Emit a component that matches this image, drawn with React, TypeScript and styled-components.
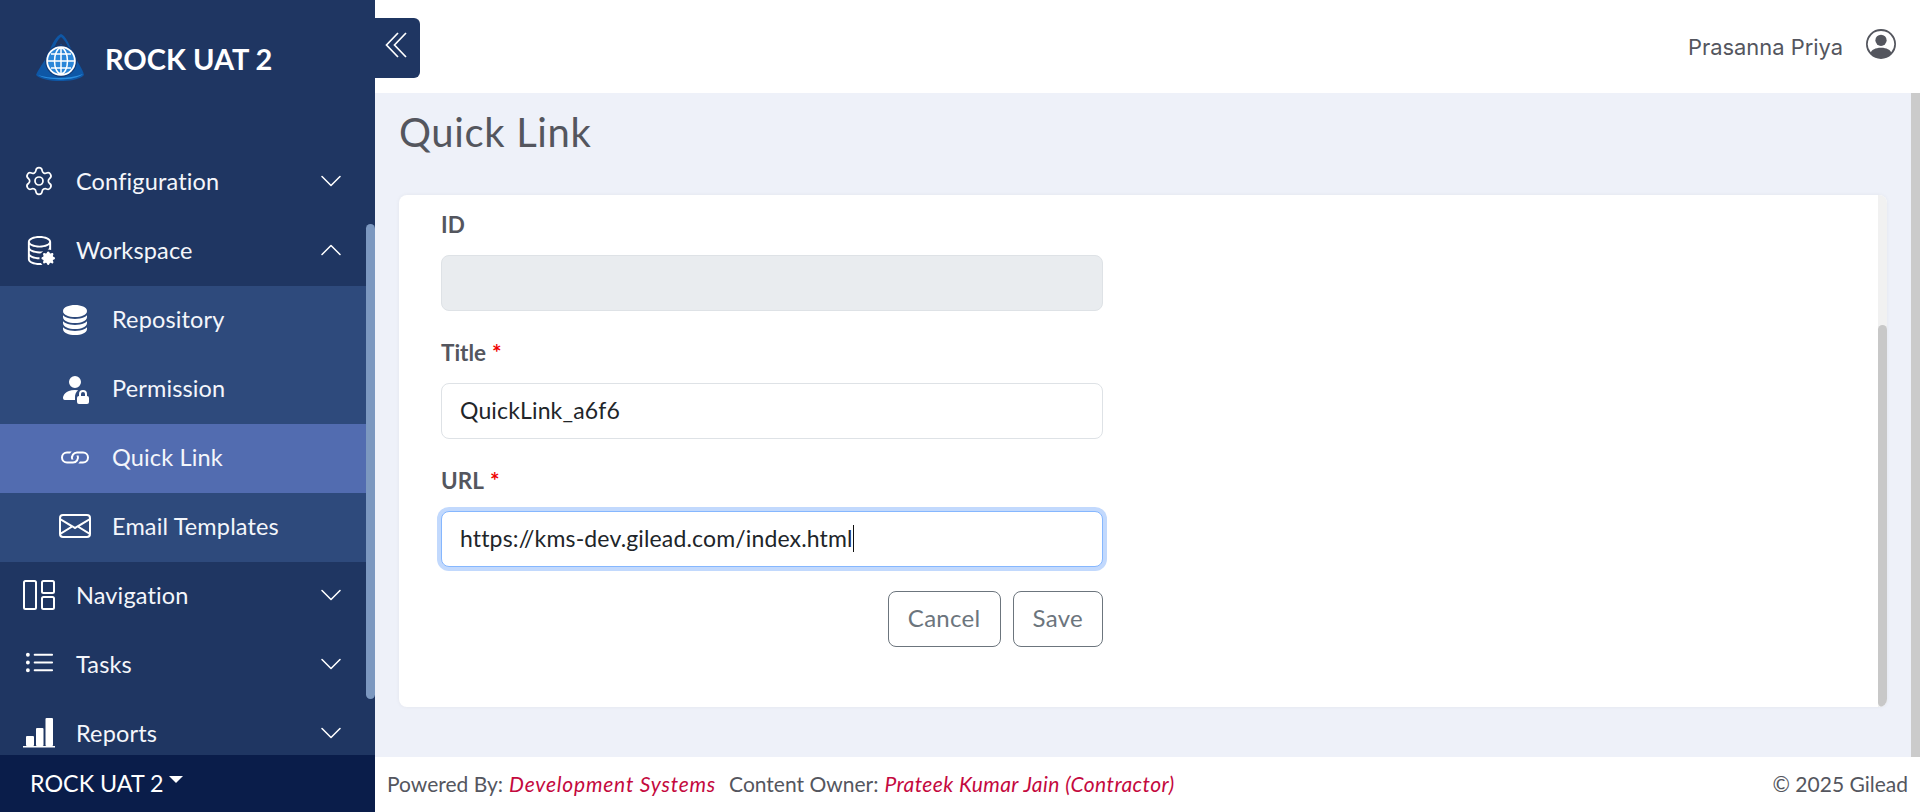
import styled, { createGlobalStyle } from "styled-components";
import { ChevronDown, ChevronUp, Settings } from "lucide-react";
import {
  BsDatabaseFill,
  BsDatabaseGear,
  BsEnvelope,
  BsLink,
  BsListUl,
  BsPersonCircle,
  BsPersonFillLock,
} from "react-icons/bs";
import type { ReactNode } from "react";

const FONT = `Lato, "Open Sans", "Liberation Sans", sans-serif`;

const GlobalStyle = createGlobalStyle`
  html, body {
    margin: 0;
    height: 100%;
    overflow: hidden;
    font-family: ${FONT};
  }
  * { box-sizing: border-box; }
`;

const Shell = styled.div`
  display: grid;
  grid-template-columns: 375px 1fr;
  width: 100%;
  height: 812px;
  background: #fff;
`;

const Sidebar = styled.aside`
  display: flex;
  flex-direction: column;
  height: 812px;
  background: #1f3662;
  color: #fff;
  overflow: hidden;
`;

const Brand = styled.div`
  display: flex;
  align-items: center;
  gap: 21px;
  height: 148px;
  flex: none;
  padding: 0 0 32px 36px;
`;

const BrandName = styled.div`
  font-size: 29px;
  font-weight: 700;
  color: #fff;
`;

const NavArea = styled.div`
  position: relative;
  flex: 1;
  min-height: 0;
  overflow: hidden;
  padding-right: 9px;
`;

const ScrollThumb = styled.div`
  position: absolute;
  top: 76px;
  right: 0;
  width: 9px;
  height: 475px;
  border-radius: 5px;
  background: #7c98c0;
`;

const NavRow = styled.div<{ $tone?: "sub" | "active" }>`
  display: flex;
  align-items: center;
  height: 69px;
  padding-left: ${(p) => (p.$tone ? "59px" : "23px")};
  padding-right: 17px;
  padding-bottom: 4px;
  background: ${(p) =>
    p.$tone === "active" ? "#526cb0" : p.$tone === "sub" ? "#2e4a7c" : "transparent"};
  font-size: 23.5px;
  letter-spacing: 0.15px;
`;

const NavIcon = styled.span`
  display: flex;
  align-items: center;
  justify-content: center;
  width: 32px;
  height: 32px;
  flex: none;
  margin-right: 21px;
`;

const NavLabel = styled.span`
  flex: 1;
  color: #f4f6fb;
`;

const EnvSwitcher = styled.div`
  display: flex;
  align-items: center;
  gap: 6px;
  height: 57px;
  flex: none;
  padding: 0 0 2px 30px;
  background: #0a1d4a;
  font-size: 23.3px;
`;

const CaretDown = styled.span`
  width: 0;
  height: 0;
  margin-bottom: 6px;
  border-left: 7px solid transparent;
  border-right: 7px solid transparent;
  border-top: 7px solid #fff;
`;

const Main = styled.div`
  display: flex;
  flex-direction: column;
  min-width: 0;
  height: 812px;
`;

const Topbar = styled.header`
  position: relative;
  display: flex;
  align-items: center;
  justify-content: flex-end;
  gap: 23px;
  height: 93px;
  flex: none;
  padding: 0 24px 5px 0;
`;

const CollapseButton = styled.div`
  position: absolute;
  top: 18px;
  left: 0;
  display: flex;
  align-items: center;
  justify-content: center;
  width: 45px;
  height: 60px;
  padding: 0 3px 7px 0;
  border-radius: 0 6px 6px 0;
  background: #1f3662;
  color: #fff;
`;

const UserName = styled.span`
  padding-top: 5px;
  font-family: Inter, sans-serif;
  font-size: 21.9px;
  color: #54565e;
`;

const UserIcon = styled.span`
  display: flex;
  color: #54565e;
`;

const Body = styled.main`
  display: flex;
  flex: 1;
  min-height: 0;
  background: #eef1f9;
`;

const BodyInner = styled.div`
  display: flex;
  flex-direction: column;
  flex: 1;
  min-width: 0;
  padding: 0 24px 50px 24px;
`;

const PageBar = styled.div`
  width: 9px;
  flex: none;
  background: #cbcbcb;
`;

const PageTitle = styled.h1`
  display: flex;
  align-items: center;
  height: 102px;
  margin: 0;
  padding-bottom: 25px;
  font-size: 40px;
  font-weight: 400;
  letter-spacing: 0.65px;
  color: #54565e;
`;

const Card = styled.section`
  display: flex;
  flex: 1;
  min-height: 0;
  border-radius: 8px;
  background: #fff;
  box-shadow: 0 0 4px rgba(0, 0, 0, 0.05);
  overflow: hidden;
`;

const CardForm = styled.div`
  flex: 1;
  min-width: 0;
  padding: 14px 42px 0 42px;
`;

const CardTrack = styled.div`
  position: relative;
  width: 9px;
  flex: none;
  background: #f1f1f1;
`;

const CardThumb = styled.div`
  position: absolute;
  top: 130px;
  right: 0;
  bottom: 0;
  left: 0;
  border-radius: 5px;
  background: #c8c8c8;
`;

const Field = styled.div`
  width: 662px;
  margin-bottom: 26px;

  &:nth-of-type(3) {
    margin-bottom: 24px;
  }
`;

const Label = styled.div`
  display: flex;
  align-items: center;
  gap: 6px;
  height: 30px;
  margin-bottom: 16px;
  font-size: 22.5px;
  font-weight: 700;
  color: #54565e;
`;

const Required = styled.span`
  color: #f00000;
`;

const InputBox = styled.div<{ $state?: "disabled" | "focus" }>`
  display: flex;
  align-items: center;
  height: 56px;
  padding: 0 18px 2px;
  border: 1px solid ${(p) => (p.$state === "focus" ? "#86b7fe" : "#dee2e6")};
  border-radius: 8px;
  background: ${(p) => (p.$state === "disabled" ? "#e9ecef" : "#fff")};
  box-shadow: ${(p) => (p.$state === "focus" ? "0 0 0 4px #c2d9fd" : "none")};
  font-size: 23px;
  letter-spacing: 0.15px;
  color: #212529;
`;

const Caret = styled.span`
  width: 1px;
  height: 27px;
  background: #111;
`;

const Actions = styled.div`
  display: flex;
  justify-content: flex-end;
  gap: 12px;
  width: 662px;
`;

const OutlineButton = styled.button`
  height: 56px;
  padding: 0 19px 4px;
  border: 1px solid #6c757d;
  border-radius: 8px;
  background: #fff;
  font-family: ${FONT};
  font-size: 24px;
  letter-spacing: 0.3px;
  color: #6c757d;
`;

const Footer = styled.footer`
  display: flex;
  align-items: center;
  justify-content: space-between;
  height: 55px;
  flex: none;
  padding: 0 12px 2px;
  font-size: 21px;
  color: #54565e;
`;

const FooterLeft = styled.div`
  display: flex;
  gap: 13px;
`;

const Owner = styled.em<{ $spacing: number }>`
  margin-left: 6px;
  letter-spacing: ${(p) => p.$spacing}px;
  color: #c4093e;
`;

function CollapseIcon() {
  return (
    <svg width="22" height="26" viewBox="0 0 22 26" fill="none" stroke="#fff" strokeWidth="1.7">
      <path d="M13 1 L1.5 13 L13 25" />
      <path d="M21 1 L9.5 13 L21 25" />
    </svg>
  );
}

function LayoutIcon() {
  return (
    <svg width="32" height="32" viewBox="0 0 32 32" fill="none" stroke="#fff" strokeWidth="2">
      <rect x="1" y="2" width="12" height="28" rx="1.5" />
      <rect x="19" y="2" width="12" height="12" rx="1.5" />
      <rect x="19" y="18" width="12" height="12" rx="1.5" />
    </svg>
  );
}

function ReportsIcon() {
  return (
    <svg width="32" height="30" viewBox="0 0 32 30" fill="#fff">
      <rect x="3" y="18" width="8" height="10" rx="1" />
      <rect x="13" y="10" width="7.5" height="18" rx="1" />
      <rect x="22.5" y="0" width="7.5" height="28" rx="1" />
      <rect x="0" y="28" width="32" height="1.5" />
    </svg>
  );
}

function Logo() {
  return (
    <svg width="48" height="48" viewBox="0 0 48 48">
      <path
        d="M25 0 C30 2 33 10 36 17 C40 26 47 35 48 41 C44 46 32 47 24 47 C14 47 4 45 0 41 C3 34 9 27 13 18 C16 10 20 2 25 0 Z"
        fill="#0e57a6"
      />
      <path d="M25 3 C29 6 32 12 34 17 L25 10 L17 17 C19 12 21 6 25 3 Z" fill="#1f3662" />
      <path d="M2 41 C14 45 34 45 47 40 C40 47 12 47 2 41 Z" fill="#2a8ee0" />
      <circle cx="25" cy="27" r="16" fill="#123a75" />
      <circle cx="25" cy="27" r="14.8" fill="#fff" />
      <circle cx="25" cy="27" r="13" fill="#2a86d8" />
      <g fill="none" stroke="#fff" strokeWidth="1.5">
        <ellipse cx="25" cy="27" rx="6.5" ry="13" />
        <path d="M25 14 V40 M12 27 H38 M15 20 H35 M15 34 H35" />
      </g>
    </svg>
  );
}

interface MenuItem {
  label: string;
  icon: ReactNode;
  tone?: "sub" | "active";
  open?: boolean;
  expandable?: boolean;
}

const menu: MenuItem[] = [
  { label: "Configuration", icon: <Settings size={36} strokeWidth={1.3} />, expandable: true },
  { label: "Workspace", icon: <BsDatabaseGear size={31} />, expandable: true, open: true },
  { label: "Repository", icon: <BsDatabaseFill size={32} />, tone: "sub" },
  { label: "Permission", icon: <BsPersonFillLock size={32} />, tone: "sub" },
  { label: "Quick Link", icon: <BsLink size={33} />, tone: "active" },
  { label: "Email Templates", icon: <BsEnvelope size={32} />, tone: "sub" },
  { label: "Navigation", icon: <LayoutIcon />, expandable: true },
  { label: "Tasks", icon: <BsListUl size={31} />, expandable: true },
  { label: "Reports", icon: <ReportsIcon />, expandable: true },
];

export default function App() {
  return (
    <Shell>
      <GlobalStyle />
      <Sidebar>
        <Brand>
          <Logo />
          <BrandName>ROCK UAT 2</BrandName>
        </Brand>
        <NavArea>
          {menu.map((item) => (
            <NavRow key={item.label} $tone={item.tone}>
              <NavIcon>{item.icon}</NavIcon>
              <NavLabel>{item.label}</NavLabel>
              {item.expandable &&
                (item.open ? (
                  <ChevronUp size={36} strokeWidth={1.05} />
                ) : (
                  <ChevronDown size={36} strokeWidth={1.05} />
                ))}
            </NavRow>
          ))}
          <ScrollThumb />
        </NavArea>
        <EnvSwitcher>
          ROCK UAT 2
          <CaretDown />
        </EnvSwitcher>
      </Sidebar>
      <Main>
        <Topbar>
          <CollapseButton>
            <CollapseIcon />
          </CollapseButton>
          <UserName>Prasanna Priya</UserName>
          <UserIcon>
            <BsPersonCircle size={30} />
          </UserIcon>
        </Topbar>
        <Body>
          <BodyInner>
            <PageTitle>Quick Link</PageTitle>
            <Card>
              <CardForm>
                <Field>
                  <Label>ID</Label>
                  <InputBox $state="disabled" />
                </Field>
                <Field>
                  <Label>
                    Title <Required>*</Required>
                  </Label>
                  <InputBox>QuickLink_a6f6</InputBox>
                </Field>
                <Field>
                  <Label>
                    URL <Required>*</Required>
                  </Label>
                  <InputBox $state="focus">
                    https://kms-dev.gilead.com/index.html
                    <Caret />
                  </InputBox>
                </Field>
                <Actions>
                  <OutlineButton>Cancel</OutlineButton>
                  <OutlineButton>Save</OutlineButton>
                </Actions>
              </CardForm>
              <CardTrack>
                <CardThumb />
              </CardTrack>
            </Card>
          </BodyInner>
          <PageBar />
        </Body>
        <Footer>
          <FooterLeft>
            <span>
              Powered By:<Owner $spacing={0.8}>Development Systems</Owner>
            </span>
            <span>
              Content Owner:<Owner $spacing={0.42}>Prateek Kumar Jain (Contractor)</Owner>
            </span>
          </FooterLeft>
          <span>© 2025 Gilead</span>
        </Footer>
      </Main>
    </Shell>
  );
}
